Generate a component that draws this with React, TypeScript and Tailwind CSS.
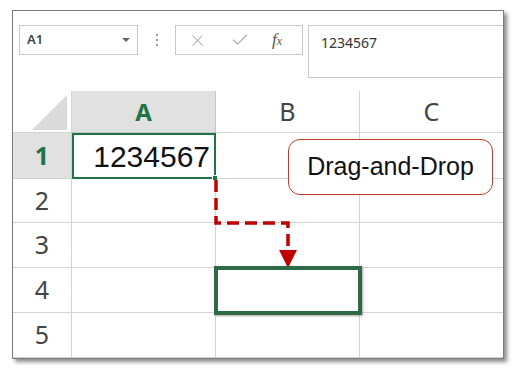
import { X, Check } from 'lucide-react'

const rows = [
  { n: '1', h: 'h-[46px]' },
  { n: '2', h: 'h-[44px]' },
  { n: '3', h: 'h-[45px]' },
  { n: '4', h: 'h-[45px]' },
  { n: '5', h: 'h-[45px]' },
]

const headFont = { fontFamily: '"Noto Sans", "Open Sans", sans-serif' }
const cellFont = { fontFamily: '"Liberation Sans", Arial, sans-serif' }

export default function App() {
  return (
    <div className="w-[524px] h-[375px] bg-white pl-[12px] pt-[10px]">
      <div className="relative w-[492px] h-[349px] border border-[#7c7c7c] bg-white shadow-[3px_3px_4px_rgba(0,0,0,0.45)] overflow-hidden">
        {/* formula bar */}
        <div className="flex items-start h-[80px] pt-[14px] pl-[6px] text-[14px] text-[#333]" style={headFont}>
          <div className="flex items-center justify-between w-[119px] h-[30px] border border-[#c8c8c8] pl-[7px] pr-[7px]">
            <span className="text-[13px] font-semibold text-[#444]">A1</span>
            <span className="w-0 h-0 border-l-[4px] border-r-[4px] border-t-[4px] border-l-transparent border-r-transparent border-t-[#666]" />
          </div>
          <div className="flex flex-col items-center justify-center gap-[3px] w-[37px] h-[30px]">
            <span className="w-[2px] h-[2px] bg-[#9a9a9a]" />
            <span className="w-[2px] h-[2px] bg-[#9a9a9a]" />
            <span className="w-[2px] h-[2px] bg-[#9a9a9a]" />
          </div>
          <div className="flex items-center w-[128px] h-[30px] border border-[#c8c8c8]">
            <X className="w-[19px] h-[19px] ml-[12px] text-[#a8a8a8]" strokeWidth={1.3} />
            <Check className="w-[20px] h-[20px] ml-[23px] text-[#a8a8a8]" strokeWidth={1.3} />
            <span className="ml-[22px] text-[17px] italic text-[#555]" style={{ fontFamily: '"Liberation Serif", serif' }}>
              f<span className="text-[12px]">x</span>
            </span>
          </div>
          <div className="flex-1 h-[53px] ml-[5px] border-l border-t border-b border-[#c8c8c8] pl-[12px] pt-[6px] text-[14px] text-[#333]">
            1234567
          </div>
        </div>

        {/* grid */}
        <div className="grid grid-cols-[59px_144px_144px_1fr]">
          <div className="h-[42px] border-r border-b border-[#d4d4d4] flex items-end justify-end pr-[4px] pb-[2px]">
            <svg width="35" height="35" viewBox="0 0 35 35">
              <polygon points="0,35 35,0 35,35" fill="#dadada" />
            </svg>
          </div>
          <div className="h-[42px] bg-[#e1e1e1] border-r border-b border-[#c6c6c6] flex items-center justify-center text-[24px] font-bold text-[#217346]" style={headFont}>
            A
          </div>
          <div className="h-[42px] border-r border-b border-[#d4d4d4] flex items-center justify-center text-[25px] text-[#444]" style={headFont}>
            B
          </div>
          <div className="h-[42px] border-b border-[#d4d4d4] flex items-center justify-center text-[25px] text-[#444]" style={headFont}>
            C
          </div>

          {rows.map((r, i) => (
            <div key={r.n} className="contents">
              <div
                className={`${r.h} border-r border-b border-[#d4d4d4] flex items-center justify-center text-[25px] ${i === 0 ? 'bg-[#e1e1e1] font-bold text-[#217346]' : 'text-[#444]'}`}
                style={headFont}
              >
                {r.n}
              </div>
              {i === 0 ? (
                <div className={`${r.h} relative border-2 border-[#217346] flex items-center justify-end pr-[4px] text-[30px] text-[#111]`} style={cellFont}>
                  1234567
                  <span className="absolute -right-[4px] -bottom-[4px] w-[6px] h-[6px] bg-[#217346] border border-white" />
                </div>
              ) : (
                <div className={`${r.h} border-r border-b border-[#d4d4d4]`} />
              )}
              <div className={`${r.h} border-r border-b border-[#d4d4d4]`} />
              <div className={`${r.h} border-b border-[#d4d4d4]`} />
            </div>
          ))}
        </div>

        {/* annotation */}
        <div className="absolute left-[275px] top-[128px] w-[205px] h-[56px] rounded-[12px] border-[1.5px] border-[#c0392b] bg-white flex items-center justify-center text-[25px] text-[#111]" style={cellFont}>
          Drag-and-Drop
        </div>

        <svg className="absolute left-0 top-0" width="492" height="349" viewBox="0 0 492 349">
          <polyline
            points="203,169 203,212 275,212 275,236"
            fill="none"
            stroke="#c00000"
            strokeWidth="3.5"
            strokeDasharray="12 6"
          />
          <polygon points="266,239 284,239 275,257" fill="#c00000" />
        </svg>

        <div className="absolute left-[201px] top-[255px] w-[148px] h-[49px] border-[4px] border-[#2d6a45] shadow-[1px_1px_2px_rgba(0,0,0,0.35)]" />
      </div>
    </div>
  )
}
